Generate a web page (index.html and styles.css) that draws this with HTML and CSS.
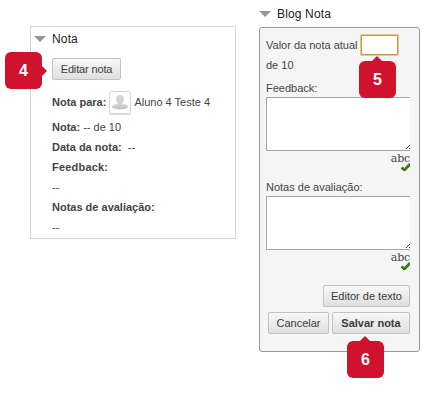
FILE: index.html
```html
<!DOCTYPE html>
<html lang="pt-BR">
<head>
<meta charset="utf-8">
<title>Nota</title>
<link rel="stylesheet" href="styles.css">
</head>
<body>
<main class="page">
  <section class="summary">
    <h2 class="title"><i class="arrow"></i><span>Nota</span></h2>
    <div class="summary-body">
      <button class="btn edit"><span>Editar nota</span></button>
      <div class="row person"><b>Nota para:</b>
        <span class="avatar"><svg width="18" height="18" viewBox="0 0 18 18"><defs><linearGradient id="g" x1="0" y1="0" x2="0" y2="1"><stop offset="0" stop-color="#dedede"/><stop offset="1" stop-color="#bdbdbd"/></linearGradient></defs><path fill="url(#g)" d="M1 14c0-2 3-2.800 5.500-3.500h5C14 11.200 17 12 17 14c0 3-16 3-16 0z"/><ellipse cx="9" cy="6.500" rx="4.300" ry="5" fill="#d4d4d4" stroke="#fff" stroke-width=".7"/><path d="M7 10v2q2 1.500 4 0v-2" fill="#d0d0d0"/></svg></span><span>Aluno 4 Teste 4</span></div>
      <div class="row"><b>Nota:</b> -- de 10</div>
      <div class="row"><b>Data da nota:</b>&nbsp; --</div>
      <div class="row"><b class="wide">Feedback:</b></div>
      <div class="row">--</div>
      <div class="row"><b>Notas de avaliação:</b></div>
      <div class="row">--</div>
    </div>
    <span class="callout four">4</span>
  </section>
  <section class="grading">
    <h2 class="title"><i class="arrow"></i><span>Blog Nota</span></h2>
    <form class="form">
      <div class="value"><label for="v">Valor da nota atual</label><input id="v" class="grade"></div>
      <div class="row">de 10</div>
      <div class="label first">Feedback:</div>
      <div class="area"><svg class="grip" width="4" height="4"><path d="M0 4L4 0M3 4L4 3" stroke="#555"/></svg></div>
      <div class="spell"><span>abc</span><svg class="check" width="9" height="8"><path d="M0.500 4.500L3.500 7L9 1" fill="none" stroke="#286b08" stroke-width="2.600"/><path d="M1 4L3.500 6.300L8.500 1" fill="none" stroke="#51a51b"/></svg></div>
      <div class="label second">Notas de avaliação:</div>
      <div class="area"><svg class="grip" width="4" height="4"><path d="M0 4L4 0M3 4L4 3" stroke="#555"/></svg></div>
      <div class="spell"><span>abc</span><svg class="check" width="9" height="8"><path d="M0.500 4.500L3.500 7L9 1" fill="none" stroke="#286b08" stroke-width="2.600"/><path d="M1 4L3.500 6.300L8.500 1" fill="none" stroke="#51a51b"/></svg></div>
      <div class="actions top"><button type="button" class="btn editor"><span>Editor de texto</span></button></div>
      <div class="actions"><button type="button" class="btn cancel"><span>Cancelar</span></button><button type="button" class="btn save"><span>Salvar nota</span></button></div>
    </form>
    <span class="callout up five">5</span>
    <span class="callout up six">6</span>
  </section>
</main>
</body>
</html>
```
FILE: styles.css
```css
* { box-sizing: border-box; }
body {
  margin: 0;
  background: #fff;
  color: #444;
  font: 11px/20px "Liberation Sans", Arial, sans-serif;
}
.page {
  display: flex;
  align-items: flex-start;
  gap: 23px;
  width: 423px;
  height: 403px;
  padding-left: 30px;
  overflow: hidden;
}
.summary {
  position: relative;
  width: 206px;
  height: 213px;
  margin-top: 26px;
  border: 1px solid #d5d5d5;
}
.title {
  display: flex;
  align-items: center;
  margin: 0;
  height: 24px;
  color: #222;
  font-size: 12px;
  font-weight: normal;
  letter-spacing: .15px;
}
.arrow {
  border: 6px solid transparent;
  border-top-color: #969696;
  border-bottom: 0;
}
.summary .arrow { margin: 0 6px 0 3px; }
.grading .arrow { margin-right: 6px; }
.summary-body { padding: 7px 0 0 21px; }
.btn {
  display: block;
  height: 22px;
  padding: 0;
  border: 1px solid #c2c2c2;
  border-radius: 2px;
  background: linear-gradient(#f8f8f8, #dfdfdf);
  color: #3b3b3b;
  font: 11px/20px "Liberation Sans", Arial, sans-serif;
  white-space: nowrap;
}
.edit { width: 69px; letter-spacing: -.15px; }
.row { height: 20px; white-space: pre; }
.wide { letter-spacing: .2px; }
.person {
  display: flex;
  align-items: center;
  height: 23px;
  margin: 10px 0 4px;
}
.avatar {
  display: block;
  width: 22px;
  height: 23px;
  margin: 2px 3px 0 3px;
  padding: 1px;
  border: 1px solid #d6d6d6;
  border-radius: 2px;
  box-shadow: 0 1px 1px #ddd;
}
.avatar svg { display: block; }
.grading { position: relative; width: 161px; }
.grading .title { height: 27px; }
.form {
  height: 325px;
  padding: 6px 9px 0 6px;
  border: 1px solid #999;
  border-radius: 3px;
  background: #f5f5f5;
}
.value { display: flex; align-items: center; height: 22px; }
.value label { width: 95px; white-space: nowrap; }
.grade {
  width: 37px;
  height: 20px;
  padding: 0;
  border: 1px solid #c59a45;
  border-radius: 1px;
  outline: 0;
  box-shadow: 0 0 0 1px #e6c582;
  background: #fff;
}
.form .row { line-height: 19px; }
.label { height: 20px; white-space: nowrap; }
.first { margin-top: 1px; line-height: 22px; }
.second { margin-top: 5px; line-height: 22px; }
.area {
  position: relative;
  height: 54px;
  border: 1px solid #a5a5aa;
  border-right: 0;
  background: #fff;
}
.grip { position: absolute; right: 0; bottom: 1px; }
.spell {
  position: relative;
  height: 20px;
  color: #444;
  font: 11px/15px "DejaVu Serif", serif;
  letter-spacing: -.2px;
  text-align: right;
}
.check { position: absolute; right: 0; top: 12px; }
.actions { display: flex; justify-content: flex-end; gap: 3px; margin-bottom: 5px; }
.top { margin-top: 15px; }
.editor { width: 87px; }
.cancel { width: 61px; }
.save { width: 78px; font-weight: bold; }
.callout {
  position: absolute;
  width: 37px;
  height: 37px;
  border-radius: 6px;
  background: #cf122e;
  color: #fff;
  font-size: 16px;
  font-weight: bold;
  line-height: 38px;
  text-align: center;
}
.callout::after {
  content: "";
  position: absolute;
  top: 14px;
  left: 37px;
  border: 5px solid transparent;
  border-left-color: #cf122e;
  border-right: 0;
}
.up::after {
  top: -5px;
  left: 13px;
  border: 5px solid transparent;
  border-bottom-color: #cf122e;
  border-top: 0;
}
.four { left: -26px; top: 25px; }
.five { left: 100px; top: 61px; }
.six { left: 88px; top: 341px; }
```
